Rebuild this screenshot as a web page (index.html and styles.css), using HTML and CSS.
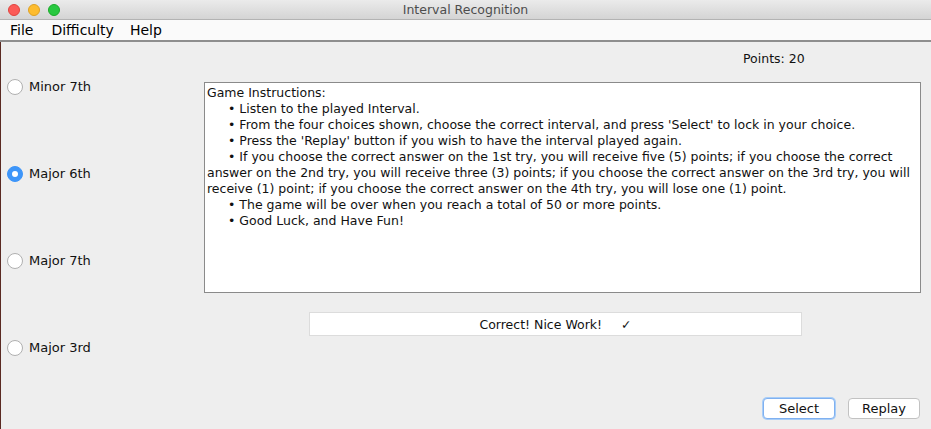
FILE: index.html
```html
<!DOCTYPE html>
<html>
<head>
<meta charset="utf-8">
<link rel="stylesheet" href="styles.css">
</head>
<body>
<div class="window">
  <div class="titlebar">
    <div class="lights">
      <span class="light red"></span>
      <span class="light yellow"></span>
      <span class="light green"></span>
    </div>
    <div class="title">Interval Recognition</div>
  </div>
  <div class="menubar">
    <span class="menu m-file">File</span>
    <span class="menu m-diff">Difficulty</span>
    <span class="menu m-help">Help</span>
  </div>
  <div class="content">
    <div class="choices">
      <label class="radio"><span class="dot"></span>Minor 7th</label>
      <label class="radio"><span class="dot checked"></span>Major 6th</label>
      <label class="radio"><span class="dot"></span>Major 7th</label>
      <label class="radio"><span class="dot"></span>Major 3rd</label>
    </div>
    <div class="main">
      <div class="points">Points: 20</div>
      <div class="instructions">
        <div>Game Instructions:</div>
        <div class="item">• Listen to the played Interval.</div>
        <div class="item">• From the four choices shown, choose the correct interval, and press 'Select' to lock in your choice.</div>
        <div class="item">• Press the 'Replay' button if you wish to have the interval played again.</div>
        <div class="item">• If you choose the correct answer on the 1st try, you will receive five (5) points; if you choose the correct answer on the 2nd try, you will receive three (3) points; if you choose the correct answer on the 3rd try, you will receive (1) point; if you choose the correct answer on the 4th try, you will lose one (1) point.</div>
        <div class="item">• The game will be over when you reach a total of 50 or more points.</div>
        <div class="item">• Good Luck, and Have Fun!</div>
      </div>
      <div class="status">Correct! Nice Work!<span class="check">✓</span></div>
      <div class="buttons">
        <button class="btn focused">Select</button>
        <button class="btn">Replay</button>
      </div>
    </div>
  </div>
</div>
</body>
</html>
```
FILE: styles.css
```css
* { box-sizing: border-box; }
html, body { margin: 0; padding: 0; }
body {
  width: 931px;
  height: 429px;
  overflow: hidden;
  font-family: "DejaVu Sans", "Liberation Sans", sans-serif;
  font-size: 12.5px;
  color: #111;
  background: #eeeeee;
}
.window {
  width: 931px;
  height: 429px;
  display: flex;
  flex-direction: column;
}
.titlebar {
  height: 20px;
  background: linear-gradient(#ebebeb, #d4d4d4);
  border-bottom: 1px solid #b3b3b3;
  display: flex;
  align-items: center;
}
.lights {
  display: flex;
  gap: 8px;
  padding-left: 8px;
}
.light {
  width: 12px;
  height: 12px;
  border-radius: 50%;
  display: block;
}
.red { background: #fc5b57; border: 1px solid #e0443e; }
.yellow { background: #fdbc2e; border: 1px solid #dea123; }
.green { background: #28c840; border: 1px solid #1aab29; }
.title {
  flex: 1;
  text-align: center;
  font-size: 12.5px;
  color: #4d4d4d;
  margin-right: 60px;
}
.menubar {
  height: 22px;
  background: #fafafa;
  border-bottom: 2px solid #8e8e8e;
  display: flex;
  align-items: center;
  font-size: 14px;
  color: #000;
  padding-left: 10px;
}
.m-file { margin-right: 18px; }
.m-diff { margin-right: 16px; }
.content {
  flex: 1;
  display: flex;
  border-left: 1px solid #5a2a22;
}
.choices {
  width: 203px;
  display: flex;
  flex-direction: column;
  gap: 70px;
  padding-top: 36px;
  padding-left: 6px;
}
.radio {
  display: flex;
  align-items: center;
  height: 17px;
  font-size: 13px;
  color: #111;
}
.dot {
  width: 16px;
  height: 16px;
  border-radius: 50%;
  background: #fff;
  border: 1px solid #b0b0b0;
  margin-right: 6px;
  position: relative;
}
.dot.checked {
  background: #3d95f9;
  border-color: #3d95f9;
}
.dot.checked::after {
  content: "";
  position: absolute;
  left: 4px;
  top: 4px;
  width: 6px;
  height: 6px;
  border-radius: 50%;
  background: #fff;
}
.main {
  flex: 1;
  display: flex;
  flex-direction: column;
  padding-right: 10px;
}
.points {
  height: 40px;
  padding-top: 9px;
  padding-left: 539px;
}
.instructions {
  height: 211px;
  background: #fff;
  border: 1px solid #8a8a8a;
  padding: 2px 2px;
  line-height: 16px;
}
.item { text-indent: 21px; }
.status {
  margin-top: 19px;
  margin-left: 105px;
  width: 493px;
  height: 24px;
  background: #fff;
  border: 1px solid #dcdcdc;
  display: flex;
  align-items: center;
  justify-content: center;
}
.check { margin-left: 19px; }
.buttons {
  margin-top: 62px;
  display: flex;
  justify-content: flex-end;
  gap: 13px;
  padding-right: 1px;
}
.btn {
  width: 72px;
  height: 21px;
  background: #fff;
  border: 1px solid #c2c2c2;
  border-radius: 4px;
  font-family: inherit;
  font-size: 13px;
  color: #111;
  padding: 0;
}
.btn.focused {
  border-color: #7fb0f0;
  box-shadow: 0 0 0 1px #a8cdf7;
}
```
